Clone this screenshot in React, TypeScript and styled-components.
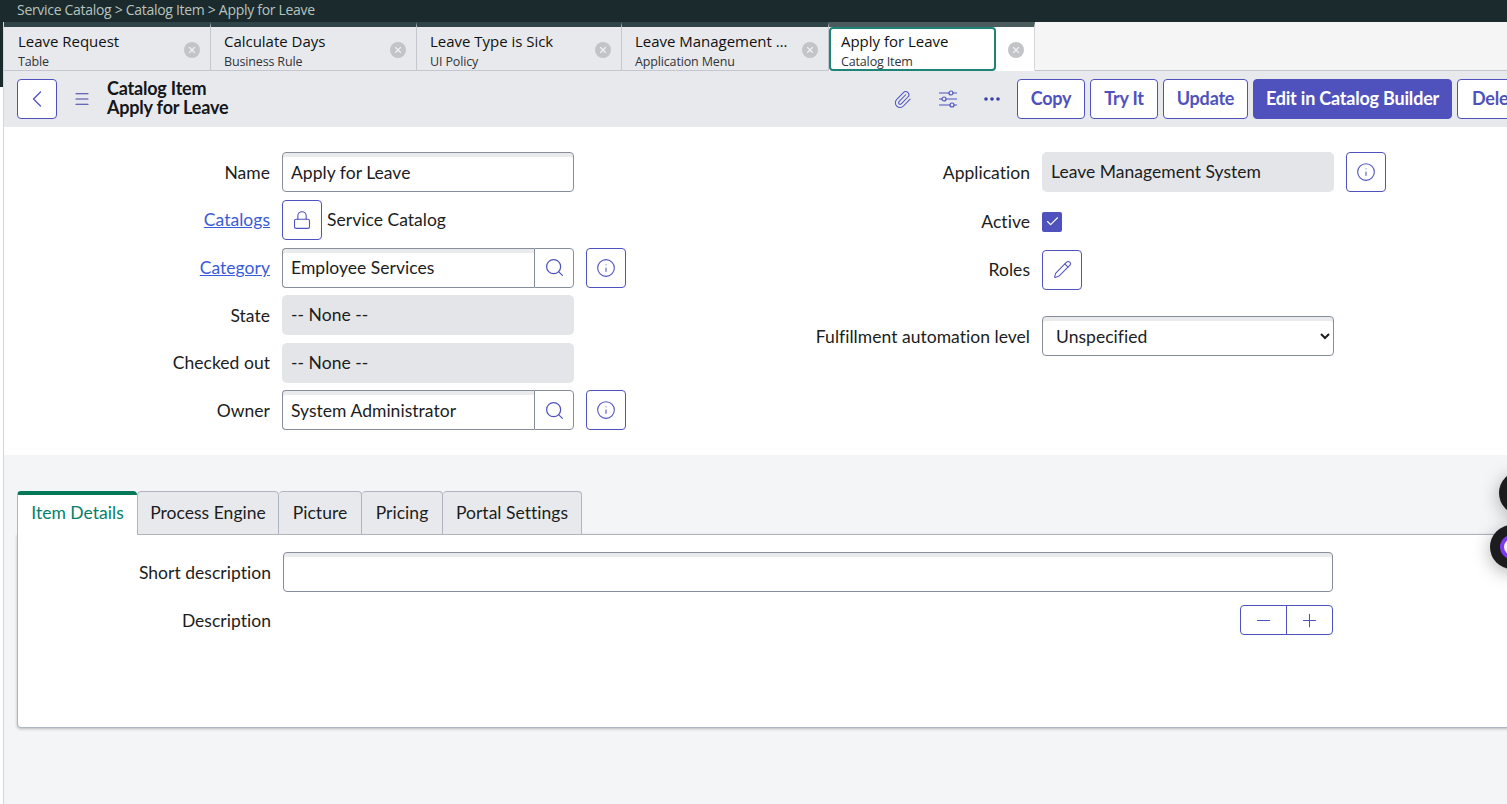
import { Check, ChevronLeft, Info, Lock, Menu, Minus, Paperclip, Pencil, Plus, Search, X } from "lucide-react"
import styled, { createGlobalStyle } from "styled-components"

const INDIGO = "#4f52bd"
const DARK = "#1a2a2d"

const navTabs = [
    { title: "Leave Request", sub: "Table", width: 207 },
    { title: "Calculate Days", sub: "Business Rule", width: 206 },
    { title: "Leave Type is Sick", sub: "UI Policy", width: 205 },
    { title: "Leave Management …", sub: "Application Menu", width: 207 },
]

const formTabs = [
    { label: "Process Engine", width: 142 },
    { label: "Picture", width: 83 },
    { label: "Pricing", width: 81 },
    { label: "Portal Settings", width: 139 },
]

function SlidersIcon() {
    return (
        <svg width="20" height="18" viewBox="0 0 20 18" fill="none" stroke={INDIGO} strokeWidth="1.2">
            <path d="M1 3h10M15 3h4M1 9h3M8 9h11M1 15h11M16 15h3" />
            <circle cx="13" cy="3" r="2" />
            <circle cx="6" cy="9" r="2" />
            <circle cx="14" cy="15" r="2" />
        </svg>
    )
}

function DotsIcon() {
    return (
        <svg width="16" height="4" viewBox="0 0 16 4" fill="#3b3fa8">
            <circle cx="2" cy="2" r="1.8" />
            <circle cx="8" cy="2" r="1.8" />
            <circle cx="14" cy="2" r="1.8" />
        </svg>
    )
}

function InfoButton() {
    return <IconButton><Info size={20} strokeWidth={1.3} /></IconButton>
}

function Lookup({ value }: { value: string }) {
    return (
        <LookupBox>
            <LookupInput value={value} readOnly />
            <LookupSearch><Search size={21} strokeWidth={1.4} /></LookupSearch>
        </LookupBox>
    )
}

export default function App() {
    return (
        <>
            <GlobalStyle />
            <Page>
                <Rail />
                <Main>
                    <Breadcrumb>Service Catalog &gt; Catalog Item &gt; Apply for Leave</Breadcrumb>

                    <TabStrip>
                        {navTabs.map(tab => (
                            <NavTab key={tab.title} $width={tab.width}>
                                <NavTabTitle>{tab.title}</NavTabTitle>
                                <NavTabSub>{tab.sub}</NavTabSub>
                                <CloseDot><X size={10} strokeWidth={2.6} /></CloseDot>
                            </NavTab>
                        ))}
                        <ActiveNavTab>
                            <ActiveNavFocus>
                                <NavTabTitle>Apply for Leave</NavTabTitle>
                                <NavTabSub>Catalog Item</NavTabSub>
                            </ActiveNavFocus>
                            <CloseDot><X size={10} strokeWidth={2.6} /></CloseDot>
                        </ActiveNavTab>
                    </TabStrip>

                    <Header>
                        <HeaderLeft>
                            <IconButton><ChevronLeft size={28} strokeWidth={1.1} /></IconButton>
                            <MenuIcon><Menu size={18} strokeWidth={1.5} /></MenuIcon>
                            <HeaderTitle>Catalog Item<br />Apply for Leave</HeaderTitle>
                        </HeaderLeft>
                        <Actions>
                            <ActionIcons>
                                <Paperclip size={19} strokeWidth={1.3} />
                                <SlidersIcon />
                                <DotsIcon />
                            </ActionIcons>
                            <ActionButton $width={68}>Copy</ActionButton>
                            <ActionButton $width={68}>Try It</ActionButton>
                            <ActionButton $width={85}>Update</ActionButton>
                            <ActionButton $width={199} $primary>Edit in Catalog Builder</ActionButton>
                            <ActionButton $width={82}>Delete</ActionButton>
                        </Actions>
                    </Header>

                    <FormSection>
                        <FormColumn>
                            <Row>
                                <Label>Name</Label>
                                <TextInput value="Apply for Leave" readOnly />
                            </Row>
                            <Row>
                                <Label><LabelLink href="#">Catalogs</LabelLink></Label>
                                <IconButton><Lock size={20} strokeWidth={1.3} /></IconButton>
                                <PlainValue>Service Catalog</PlainValue>
                            </Row>
                            <Row>
                                <Label><LabelLink href="#">Category</LabelLink></Label>
                                <Lookup value="Employee Services" />
                                <InfoButton />
                            </Row>
                            <Row>
                                <Label>State</Label>
                                <ReadOnlyField>-- None --</ReadOnlyField>
                            </Row>
                            <Row>
                                <Label>Checked out</Label>
                                <ReadOnlyField>-- None --</ReadOnlyField>
                            </Row>
                            <Row>
                                <Label>Owner</Label>
                                <Lookup value="System Administrator" />
                                <InfoButton />
                            </Row>
                        </FormColumn>

                        <FormColumn>
                            <Row>
                                <Label>Application</Label>
                                <ReadOnlyField>Leave Management System</ReadOnlyField>
                                <InfoButton />
                            </Row>
                            <Row $top={2}>
                                <Label>Active</Label>
                                <CheckBox><Check size={15} strokeWidth={1.8} /></CheckBox>
                            </Row>
                            <Row>
                                <Label>Roles</Label>
                                <IconButton><Pencil size={19} strokeWidth={1.3} /></IconButton>
                            </Row>
                            <Row $top={19}>
                                <Label>Fulfillment automation level</Label>
                                <SelectInput defaultValue="Unspecified">
                                    <option>Unspecified</option>
                                </SelectInput>
                            </Row>
                        </FormColumn>
                    </FormSection>

                    <LowerSection>
                        <FormTabs>
                            <ActiveFormTab>Item Details</ActiveFormTab>
                            {formTabs.map(tab => (
                                <FormTab key={tab.label} $width={tab.width}>{tab.label}</FormTab>
                            ))}
                        </FormTabs>
                        <Panel>
                            <PanelRow>
                                <ShortLabel>Short description</ShortLabel>
                                <WideInput readOnly />
                            </PanelRow>
                            <DescriptionRow>
                                <PanelLabel>Description</PanelLabel>
                                <Stepper>
                                    <StepButton><Minus size={21} strokeWidth={1.2} /></StepButton>
                                    <StepButton><Plus size={21} strokeWidth={1.2} /></StepButton>
                                </Stepper>
                            </DescriptionRow>
                        </Panel>
                    </LowerSection>
                </Main>

                <FloatingDark />
                <FloatingAssist><AssistRing /></FloatingAssist>
            </Page>
        </>
    )
}


const GlobalStyle = createGlobalStyle`
    html, body {
        margin: 0;
        height: 100%;
        overflow: hidden;
    }

    body {
        font-family: Lato, "Open Sans", sans-serif;
        color: #1b1d21;
    }

    * {
        box-sizing: border-box;
    }
`

const Page = styled.div`
    position: relative;
    display: flex;
    width: 1507px;
    height: 804px;
    overflow: hidden;
    background: #fff;
`

const Rail = styled.div`
    flex: 0 0 4px;
    border-right: 1px solid #d4d6da;
    background: linear-gradient(${DARK} 87px, #fff 87px);
`

const Main = styled.main`
    display: flex;
    flex-direction: column;
    flex: 0 0 1503px;
    min-width: 0;
`

const Breadcrumb = styled.div`
    height: 22px;
    margin-left: -1px;
    padding-left: 14px;
    background: ${DARK};
    color: #b9c3bd;
    font-family: "Open Sans", sans-serif;
    font-size: 14px;
    letter-spacing: -0.3px;
    line-height: 20px;
`

const TabStrip = styled.nav`
    display: flex;
    height: 49px;
    background: #f5f5f6;
    border-bottom: 1px solid #c4c7cd;
`

const NavTab = styled.div<{ $width: number }>`
    position: relative;
    flex: 0 0 ${({ $width }) => $width}px;
    padding: 4px 30px 0 13px;
    background: #e8e9ec;
    border-top: 5px solid #2f4448;
    border-right: 1px solid #c4c7cd;

    &:first-child {
        padding-left: 14px;
    }
`

const NavTabTitle = styled.div`
    font-family: "Open Sans", sans-serif;
    font-size: 15px;
    letter-spacing: -0.02px;
    line-height: 20px;
    color: #111;
    white-space: nowrap;
`

const NavTabSub = styled.div`
    margin-top: 3px;
    font-family: "Open Sans", sans-serif;
    font-size: 12.5px;
    letter-spacing: -0.15px;
    line-height: 16px;
    color: #30343a;
    white-space: nowrap;
`

const ActiveNavTab = styled.div`
    position: relative;
    flex: 0 0 206px;
    height: 49px;
    background: #fff;
    border-top: 5px solid #4a5c5c;
    border-right: 1px solid #d4d6da;
    border-bottom: 1px solid #fff;
`

const ActiveNavFocus = styled.div`
    width: 167px;
    height: 44px;
    padding: 2px 0 0 10px;
    border: 2px solid #1f8476;
    border-radius: 4px;
`

const CloseDot = styled.span`
    position: absolute;
    top: 15px;
    right: 10px;
    display: flex;
    align-items: center;
    justify-content: center;
    width: 16px;
    height: 16px;
    border-radius: 50%;
    background: #c2c4c8;
    color: #f2f2f3;
`

const Header = styled.header`
    display: grid;
    grid-template-columns: 864px 1fr;
    height: 56px;
    padding-left: 13px;
    background: #e8e9ec;
`

const HeaderLeft = styled.div`
    display: flex;
    align-items: center;
`

const IconButton = styled.button`
    display: flex;
    flex: 0 0 40px;
    align-items: center;
    justify-content: center;
    width: 40px;
    height: 40px;
    padding: 0;
    border: 1px solid ${INDIGO};
    border-radius: 4px;
    background: #fff;
    color: ${INDIGO};
`

const MenuIcon = styled.span`
    display: flex;
    margin: 0 16px 0 16px;
    color: #3b3fa8;
`

const HeaderTitle = styled.h1`
    margin: -2px 0 0;
    font-size: 18px;
    font-weight: 700;
    letter-spacing: -0.2px;
    line-height: 19px;
    color: #14161a;
`

const Actions = styled.div`
    display: flex;
    align-items: center;
    gap: 5px;
    min-width: 0;
    overflow: hidden;
`

const ActionIcons = styled.div`
    display: flex;
    flex: 0 0 131px;
    align-items: center;
    justify-content: space-between;
    padding: 0 12px;
    color: ${INDIGO};
`

const ActionButton = styled.button<{ $width: number; $primary?: boolean }>`
    flex: 0 0 ${({ $width }) => $width}px;
    height: 40px;
    padding: 0 0 2px;
    border: 1px solid ${INDIGO};
    border-radius: 4px;
    background: ${({ $primary }) => ($primary ? INDIGO : "#fff")};
    color: ${({ $primary }) => ($primary ? "#fff" : INDIGO)};
    font-family: Lato, sans-serif;
    font-size: 18px;
    font-weight: 700;
    letter-spacing: -0.2px;
    white-space: nowrap;
`

const FormSection = styled.section`
    display: grid;
    grid-template-columns: 760px 1fr;
    height: 328px;
    padding-top: 25.4px;
    background: #fff;
`

const FormColumn = styled.div`
    display: flex;
    flex-direction: column;
    gap: 7.6px;
`

const Row = styled.div<{ $top?: number }>`
    display: flex;
    align-items: center;
    gap: 12px;
    height: 40px;
    margin-top: ${({ $top }) => $top ?? 0}px;
`

const Label = styled.label`
    flex: 0 0 266px;
    font-size: 17.5px;
    letter-spacing: 0.03px;
    text-align: right;
    white-space: nowrap;
`

const LabelLink = styled.a`
    color: #3a5bd9;
`

const fieldStyle = `
    height: 40px;
    border: 1px solid #878e9b;
    background: #fff;
    box-shadow: inset 0 4px 0 #eaebed;
    color: #1b1d21;
    font-family: Lato, sans-serif;
    font-size: 17.5px;
    letter-spacing: 0.03px;
    outline: none;
`

const TextInput = styled.input`
    ${fieldStyle}
    flex: 0 0 292px;
    width: 292px;
    padding: 0 8px;
    border-radius: 4px;
`

const PlainValue = styled.span`
    margin-left: -7px;
    font-size: 17.5px;
    letter-spacing: 0.03px;
`

const LookupBox = styled.div`
    display: flex;
    flex: 0 0 292px;
`

const LookupInput = styled.input`
    ${fieldStyle}
    flex: 1;
    min-width: 0;
    padding: 0 8px;
    border-right: 0;
    border-radius: 4px 0 0 4px;
`

const LookupSearch = styled.span`
    display: flex;
    flex: 0 0 40px;
    align-items: center;
    justify-content: center;
    height: 40px;
    border: 1px solid #878e9b;
    border-radius: 0 4px 4px 0;
    color: ${INDIGO};
`

const ReadOnlyField = styled.div`
    flex: 0 0 292px;
    height: 40px;
    padding: 0 9px;
    border-radius: 5px;
    background: #e4e5e9;
    font-size: 17.5px;
    letter-spacing: 0.03px;
    line-height: 40px;
`

const CheckBox = styled.span`
    display: flex;
    align-items: center;
    justify-content: center;
    width: 20px;
    height: 20px;
    border-radius: 2px;
    background: ${INDIGO};
    color: #fff;
`

const SelectInput = styled.select`
    ${fieldStyle}
    flex: 0 0 292px;
    width: 292px;
    padding: 0 9px;
    border-radius: 4px;
`

const LowerSection = styled.section`
    flex: 1;
    padding: 36px 0 0 13px;
    background: #f4f5f7;
    overflow: hidden;
`

const FormTabs = styled.div`
    display: flex;
    height: 44px;
`

const ActiveFormTab = styled.div`
    position: relative;
    z-index: 1;
    width: 120px;
    height: 45px;
    border-top: 4px solid #047857;
    border-left: 1px solid #aeb4c0;
    border-radius: 4px 4px 0 0;
    background: #fff;
    color: #04806a;
    font-size: 17.5px;
    letter-spacing: 0.03px;
    line-height: 36px;
    text-align: center;
`

const FormTab = styled.div<{ $width: number }>`
    width: ${({ $width }) => $width}px;
    height: 44px;
    border: 1px solid #aeb4c0;
    border-left-width: ${({ $width }) => ($width === 142 ? 1 : 0)}px;
    border-radius: 4px 4px 0 0;
    background: #e8e9ec;
    font-size: 17.5px;
    letter-spacing: 0.03px;
    line-height: 42px;
    text-align: center;
`

const Panel = styled.div`
    width: 1530px;
    height: 194px;
    margin-top: -1px;
    padding-top: 17px;
    border: 1px solid #aeb4c0;
    border-radius: 0 0 0 4px;
    background: #fff;
    box-shadow: 0 1px 3px rgba(0, 0, 0, 0.25);
`

const PanelRow = styled.div`
    display: flex;
    align-items: center;
    gap: 12px;
    height: 40px;
`

const DescriptionRow = styled(PanelRow)`
    align-items: flex-start;
    height: 30px;
    margin-top: 13px;
`

const PanelLabel = styled.label`
    flex: 0 0 253px;
    font-size: 17.5px;
    letter-spacing: 0.03px;
    line-height: 32px;
    text-align: right;
`

const ShortLabel = styled(PanelLabel)`
    margin-top: 2px;
`

const WideInput = styled.input`
    ${fieldStyle}
    flex: 0 0 1050px;
    width: 1050px;
    border-radius: 4px;
`

const Stepper = styled.div`
    display: flex;
    width: 93px;
    height: 30px;
    margin-left: 957px;
    border: 1px solid ${INDIGO};
    border-radius: 4px;
    overflow: hidden;
`

const StepButton = styled.span`
    display: flex;
    flex: 1;
    align-items: center;
    justify-content: center;
    color: ${INDIGO};

    & + & {
        border-left: 1px solid ${INDIGO};
    }
`

const FloatingDark = styled.div`
    position: absolute;
    top: 471px;
    left: 1499px;
    width: 44px;
    height: 44px;
    border-radius: 50%;
    background: #1c1c1e;
    box-shadow: 0 4px 18px rgba(0, 0, 0, 0.3);
`

const FloatingAssist = styled(FloatingDark)`
    top: 525px;
    left: 1490px;
    display: flex;
    align-items: center;
    padding-left: 10px;
`

const AssistRing = styled.span`
    width: 24px;
    height: 24px;
    border: 4px solid #7c3aed;
    border-radius: 50%;
    background: #f4f1fb;
`
